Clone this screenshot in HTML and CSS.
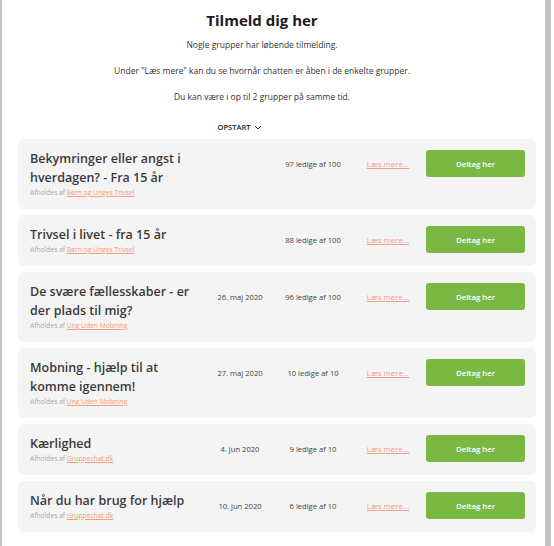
FILE: index.html
```html
<!DOCTYPE html>
<html lang="da">
<head>
    <meta charset="UTF-8">
    <meta name="viewport" content="width=device-width, initial-scale=1.0">
    <title>Tilmeld dig her</title>
    <link rel="stylesheet" href="styles.css">
</head>
<body>
    <div class="frame">
        <div class="page">
            <div class="intro">
                <h1>Tilmeld dig her</h1>
                <p>Nogle grupper har løbende tilmelding.</p>
                <p>Under "Læs mere" kan du se hvornår chatten er åben i de enkelte grupper.</p>
                <p>Du kan være i op til 2 grupper på samme tid.</p>
            </div>

            <div class="row head">
                <div></div>
                <div class="sort">OPSTART
                    <svg width="8" height="5" viewBox="0 0 8 5"><path d="M1 1l3 3 3-3" fill="none" stroke="#333" stroke-width="1"/></svg>
                </div>
            </div>

            <div class="list">
                <div class="row card">
                    <div class="info">
                        <div class="name">Bekymringer eller angst i hverdagen? - Fra 15 år</div>
                        <div class="host">Afholdes af <a href="#">Børn og Unges Trivsel</a></div>
                    </div>
                    <div class="cell"></div>
                    <div class="cell">97 ledige af 100</div>
                    <div class="cell more"><a href="#">Læs mere...</a></div>
                    <button>Deltag her</button>
                </div>
                <div class="row card">
                    <div class="info">
                        <div class="name">Trivsel i livet - fra 15 år</div>
                        <div class="host">Afholdes af <a href="#">Børn og Unges Trivsel</a></div>
                    </div>
                    <div class="cell"></div>
                    <div class="cell">88 ledige af 100</div>
                    <div class="cell more"><a href="#">Læs mere...</a></div>
                    <button>Deltag her</button>
                </div>
                <div class="row card">
                    <div class="info">
                        <div class="name">De svære fællesskaber - er der plads til mig?</div>
                        <div class="host">Afholdes af <a href="#">Ung Uden Mobning</a></div>
                    </div>
                    <div class="cell">26. maj 2020</div>
                    <div class="cell">96 ledige af 100</div>
                    <div class="cell more"><a href="#">Læs mere...</a></div>
                    <button>Deltag her</button>
                </div>
                <div class="row card">
                    <div class="info">
                        <div class="name">Mobning - hjælp til at komme igennem!</div>
                        <div class="host">Afholdes af <a href="#">Ung Uden Mobning</a></div>
                    </div>
                    <div class="cell">27. maj 2020</div>
                    <div class="cell">10 ledige af 10</div>
                    <div class="cell more"><a href="#">Læs mere...</a></div>
                    <button>Deltag her</button>
                </div>
                <div class="row card">
                    <div class="info">
                        <div class="name">Kærlighed</div>
                        <div class="host">Afholdes af <a href="#">Gruppechat.dk</a></div>
                    </div>
                    <div class="cell">4. jun 2020</div>
                    <div class="cell">9 ledige af 10</div>
                    <div class="cell more"><a href="#">Læs mere...</a></div>
                    <button>Deltag her</button>
                </div>
                <div class="row card">
                    <div class="info">
                        <div class="name">Når du har brug for hjælp</div>
                        <div class="host">Afholdes af <a href="#">Gruppechat.dk</a></div>
                    </div>
                    <div class="cell">10. jun 2020</div>
                    <div class="cell">6 ledige af 10</div>
                    <div class="cell more"><a href="#">Læs mere...</a></div>
                    <button>Deltag her</button>
                </div>
            </div>
        </div>
        <div class="bar"></div>
    </div>
</body>
</html>
```

FILE: styles.css
```css
body {
    margin: 0;
    background: white;
    font-family: 'Open Sans', 'Liberation Sans', sans-serif;
    color: #333;
}
.frame {
    display: flex;
    height: 546px;
    border-left: 2px solid #c4c4c4;
    overflow: hidden;
}
.page {
    flex: 1;
    padding: 10px 9px 0 16px;
}
.bar {
    width: 6px;
    margin-right: 3px;
    background: #c2c2c2;
}
.intro {
    padding-right: 30px;
}
h1 {
    margin: 0;
    font-size: 15px;
    line-height: 20px;
    font-weight: 700;
    color: #1c1c1c;
    text-align: center;
}
p {
    margin: 7px 0 11px;
    font-size: 8.5px;
    line-height: 15px;
    text-align: center;
}
.row {
    display: grid;
    grid-template-columns: 168px 84px 62px 1fr 99px;
    align-items: start;
}
.head {
    margin-top: 17px;
    padding: 0 11px 0 12px;
    height: 12px;
}
.sort {
    display: flex;
    align-items: center;
    justify-content: center;
    gap: 4px;
    font-size: 7.5px;
    line-height: 12px;
    font-weight: 600;
    color: #222;
}
.list {
    display: flex;
    flex-direction: column;
    gap: 6px;
    margin-top: 6px;
}
.card {
    background: #f4f4f4;
    border-radius: 6px;
    padding: 10px 11px 11px 12px;
}
.name {
    font-size: 12.5px;
    line-height: 19px;
    font-weight: 600;
    color: #3a3a3a;
}
.host {
    font-size: 6.7px;
    line-height: 11px;
    color: #a8a8a8;
}
.host a {
    color: #f0a07a;
}
.cell {
    height: 27px;
    margin-top: 1px;
    display: flex;
    align-items: center;
    justify-content: center;
    font-size: 7.6px;
    color: #444;
}
.more {
    padding-left: 6px;
}
.more a {
    color: #f0a07a;
    font-size: 7.9px;
}
button {
    margin-top: 1px;
    height: 27px;
    border: none;
    border-radius: 3px;
    background: #7ab844;
    color: white;
    font-family: inherit;
    font-size: 7.8px;
    font-weight: 600;
}
```
